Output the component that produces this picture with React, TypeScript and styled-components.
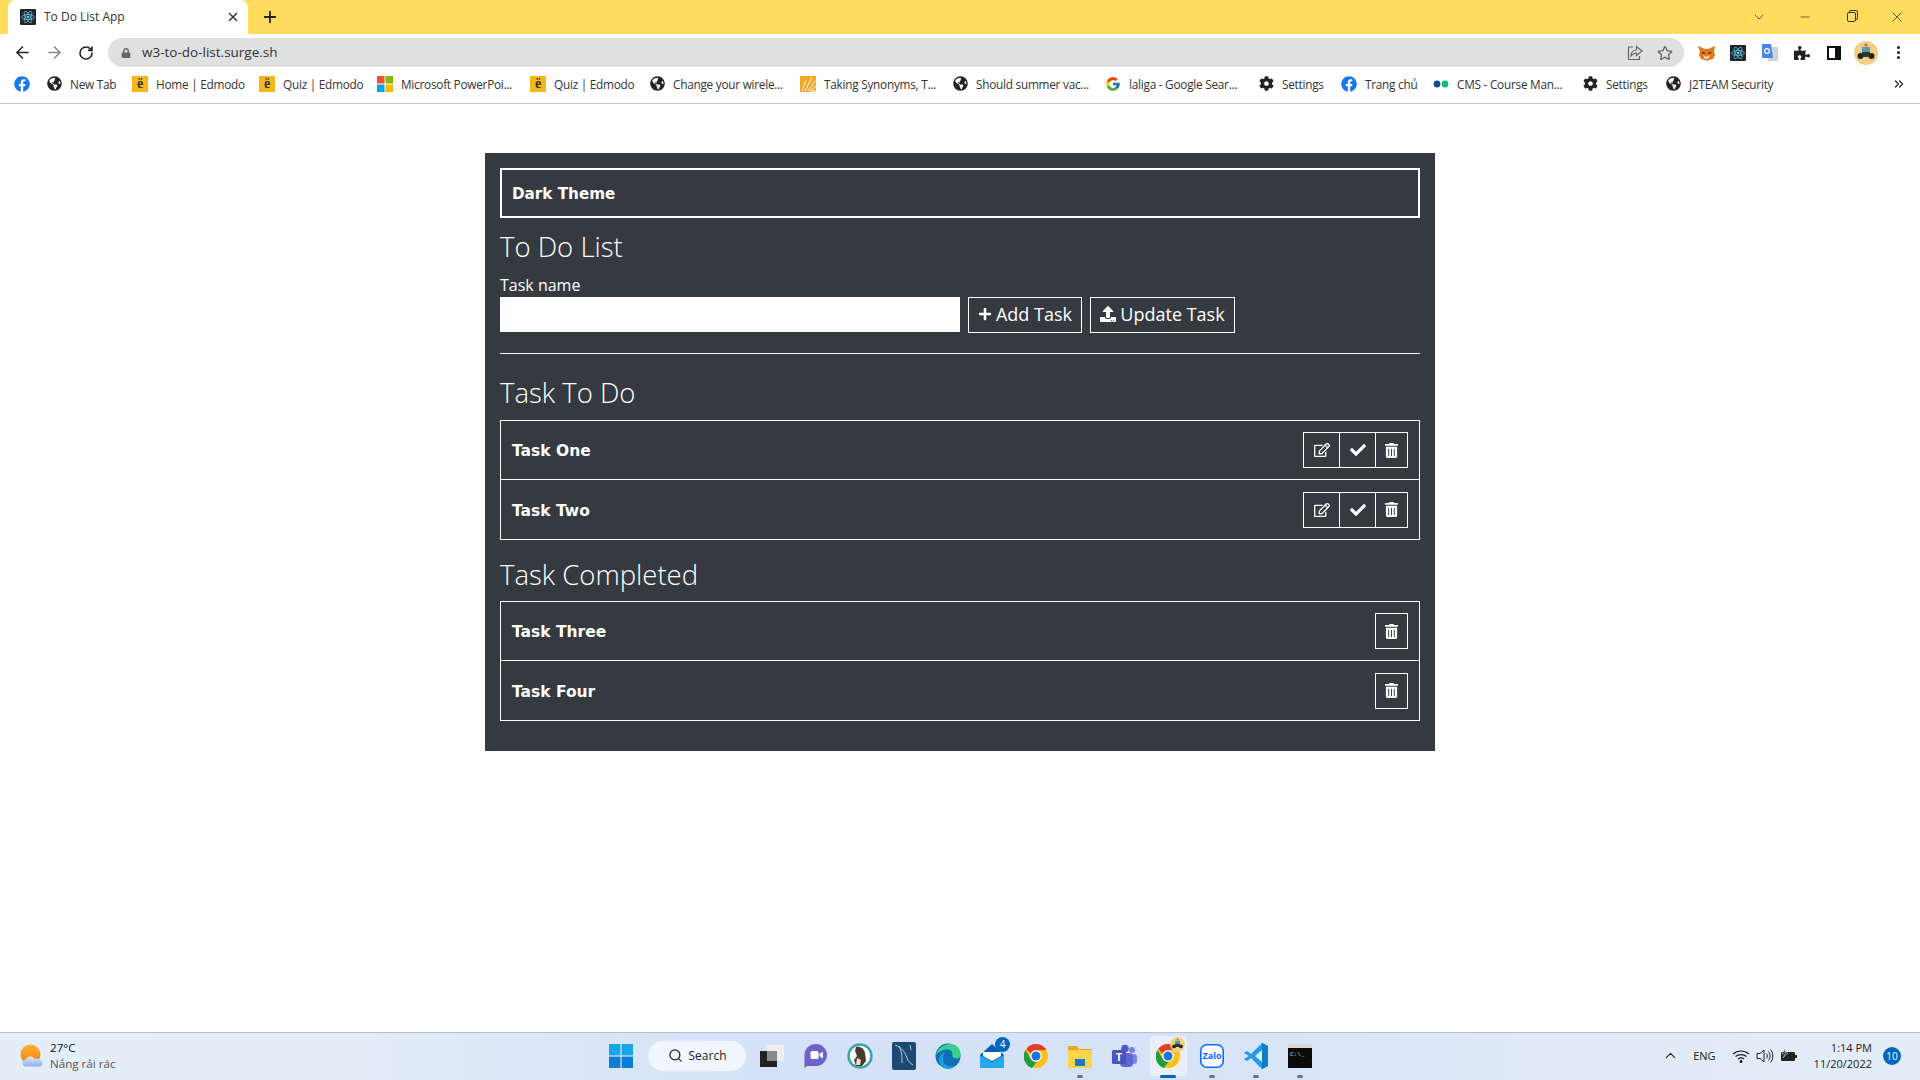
import React from "react";
import styled, { createGlobalStyle } from "styled-components";
import { ArrowLeft, ArrowRight, RotateCw, ChevronDown, Minus, X, Plus, Search, ChevronUp, ChevronsRight, EllipsisVertical } from "lucide-react";
import { FaFacebook, FaGlobeAmericas, FaCog, FaLock, FaRegStar, FaPuzzlePiece, FaRegEdit, FaCheck, FaTrashAlt, FaPlus, FaUpload } from "react-icons/fa";
import { FcGoogle } from "react-icons/fc";

const Global = createGlobalStyle`
  html, body { margin: 0; padding: 0; height: 100%; background: #fff; }
  #root { height: 100%; }
  * { box-sizing: border-box; }
`;

const Page = styled.div`
  height: 1080px;
  display: flex;
  flex-direction: column;
  font-family: "Open Sans", "Liberation Sans", sans-serif;
  overflow: hidden;
`;

const TabStrip = styled.div`
  height: 34px;
  flex: none;
  background: #ffdc5d;
  display: flex;
  align-items: center;
  padding-left: 8px;
`;
const Tab = styled.div`
  width: 240px;
  height: 34px;
  background: #fff;
  border-radius: 8px 8px 0 0;
  display: flex;
  align-items: center;
  padding: 0 8px 0 12px;
  font-size: 12px;
  color: #333;
`;
const TabTitle = styled.span`
  margin-left: 8px;
  padding-bottom: 1px;
  flex: 1;
`;
const NewTab = styled.div`
  margin-left: 13px;
  display: flex;
  color: #222;
`;
const WindowButtons = styled.div`
  margin-left: auto;
  display: flex;
  align-items: center;
  color: #333;
`;
const WindowButton = styled.div`
  width: 46px;
  display: flex;
  justify-content: center;
`;
const Restore = styled.div`
  width: 9px;
  height: 10px;
  border: 1px solid #333;
  border-radius: 2px;
  box-shadow: 2px -2px 0 -1px #ffdc5d, 2px -2px 0 0 #333;
`;

const Toolbar = styled.div`
  height: 34px;
  flex: none;
  display: flex;
  align-items: center;
  padding: 4px 0 1px 10px;
  background: #fff;
`;
const NavButton = styled.div<{ $dim?: boolean }>`
  width: 24px;
  margin-right: 8px;
  display: flex;
  justify-content: center;
  color: ${(p) => (p.$dim ? "#8a8a8a" : "#222")};
`;
const AddressBar = styled.div`
  width: 1576px;
  height: 29px;
  margin-left: 2px;
  border-radius: 15px;
  background: #e0e0e0;
  display: flex;
  align-items: center;
  padding: 0 11px 0 13px;
  font-size: 13.5px;
  color: #333;
  flex: none;
`;
const Url = styled.span`
  margin-left: 11px;
  padding-bottom: 1px;
  flex: 1;
`;
const BarIcons = styled.div`
  display: flex;
  align-items: center;
  gap: 14px;
  color: #666;
`;
const Extensions = styled.div`
  display: flex;
  align-items: center;
  margin-left: 6px;
`;
const Extension = styled.div`
  width: 32px;
  display: flex;
  justify-content: center;
  align-items: center;
  color: #222;
`;

const Bookmarks = styled.div`
  height: 36px;
  flex: none;
  display: flex;
  align-items: center;
  gap: 18px;
  padding: 0 0 4px 14px;
  background: #fff;
  border-bottom: 1px solid #c8c8c8;
`;
const Bookmark = styled.div`
  display: flex;
  align-items: center;
  gap: 8px;
  font-size: 11.8px;
  color: #333;
`;
const PinnedBookmark = styled.span`
  display: flex;
  margin-right: -2px;
`;
const BookmarkIcon = styled.span`
  width: 16px;
  display: flex;
  justify-content: center;
  flex: none;
`;
const BookmarkLabel = styled.span<{ $w: number }>`
  width: ${(p) => p.$w}px;
  white-space: nowrap;
  letter-spacing: -0.25px;
`;
const More = styled.div`
  margin-left: auto;
  margin-right: 14px;
  display: flex;
  color: #333;
`;
const Edmodo = styled.div`
  width: 16px;
  height: 16px;
  background: #f4b81c;
  color: #333;
  font: bold 14px/16px "Liberation Serif", serif;
  text-align: center;
`;

const Main = styled.main`
  flex: 1;
  padding-top: 49px;
  background: #fff;
`;
const Panel = styled.section`
  width: 950px;
  margin: 0 auto;
  background: #343a40;
  color: #fff;
  padding: 15px 15px 30px;
`;
const ThemeBox = styled.div`
  height: 50px;
  border: 2px solid #fff;
  display: flex;
  align-items: center;
  padding: 2px 0 0 10px;
`;
const BoldName = styled.span`
  font-family: "DejaVu Sans", sans-serif;
  font-weight: 700;
  font-size: 15.5px;
`;
const ThemeName = styled(BoldName)`
  font-size: 15.2px;
`;
const TaskName = styled(BoldName)`
  padding-top: 2px;
`;
const Heading = styled.h3<{ $top: number }>`
  margin: ${(p) => p.$top}px 0 0;
  font-size: 27.5px;
  line-height: 34px;
  font-weight: 300;
`;
const FieldLabel = styled.label`
  display: block;
  margin-top: 9px;
  font-size: 16px;
  line-height: 24px;
`;
const FormRow = styled.div`
  display: flex;
  align-items: flex-start;
  gap: 8px;
`;
const TaskInput = styled.input`
  width: 460px;
  height: 35px;
  border: 0;
  background: #fff;
  padding: 0;
`;
const FormButton = styled.button<{ $w: number }>`
  width: ${(p) => p.$w}px;
  height: 36px;
  background: transparent;
  border: 1px solid #fff;
  color: #fff;
  padding: 0 0 2px;
  font: 18px "Open Sans", sans-serif;
  display: flex;
  align-items: center;
  justify-content: center;
  gap: 4px;
`;
const Rule = styled.hr`
  margin: 20px 0 0;
  border: 0;
  border-top: 1px solid #fff;
`;
const TaskList = styled.ul<{ $top: number }>`
  list-style: none;
  margin: ${(p) => p.$top}px 0 0;
  padding: 0;
  border: 1px solid #fff;
`;
const TaskRow = styled.li`
  height: 58px;
  display: flex;
  align-items: center;
  justify-content: space-between;
  padding: 0 11px 0 11px;
  & + & {
    border-top: 1px solid #fff;
    height: 60px;
  }
`;
const ButtonGroup = styled.div`
  display: flex;
`;
const IconButton = styled.button<{ $w: number }>`
  width: ${(p) => p.$w}px;
  height: 36px;
  background: transparent;
  border: 1px solid #fff;
  color: #fff;
  padding: 0;
  display: flex;
  align-items: center;
  justify-content: center;
  font-size: 14px;
  & + & {
    margin-left: -1px;
  }
`;

const Taskbar = styled.footer`
  height: 48px;
  flex: none;
  display: flex;
  align-items: center;
  padding-bottom: 2px;
  border-top: 1px solid #b9c0c9;
  background: linear-gradient(90deg, #e4eef8 0%, #e2ecf7 18%, #d4e1f8 40%, #d6e2f7 60%, #dfe9f7 80%, #e3edf7 100%);
`;
const Weather = styled.div`
  width: 609px;
  flex: none;
  display: flex;
  align-items: center;
  padding-left: 20px;
  gap: 6px;
  font-size: 11.6px;
  line-height: 16px;
  color: #111;
`;
const WeatherSub = styled.div`
  color: #555;
`;
const TaskIcons = styled.div`
  display: flex;
  align-items: center;
`;
const TaskIcon = styled.div<{ $active?: boolean; $dot?: boolean }>`
  position: relative;
  width: ${(p) => (p.$active ? 37 : 44)}px;
  height: 40px;
  margin: 0 ${(p) => (p.$active ? 3.5 : 0)}px;
  display: flex;
  align-items: center;
  justify-content: center;
  ${(p) => (p.$active ? `background: #e8eff9; border-radius: 4px;` : "")}
  ${(p) =>
    p.$dot
      ? `&::after { content: ""; position: absolute; bottom: -2px; left: 19px; width: 6px; height: 3px; border-radius: 2px; background: #6b7480; }`
      : ""}
  ${(p) =>
    p.$active
      ? `&::after { content: ""; position: absolute; bottom: -2px; left: 10px; width: 16px; height: 3px; border-radius: 2px; background: #0067c0; }`
      : ""}
`;
const OverlayAvatar = styled.div`
  position: absolute;
  top: 1px;
  right: 2px;
  display: flex;
`;
const SearchPill = styled.div`
  width: 98px;
  height: 30px;
  margin: 0 4px 0 15px;
  border-radius: 15px;
  background: #f1f5fc;
  display: flex;
  align-items: center;
  justify-content: center;
  gap: 6px;
  font-size: 12px;
  color: #222;
`;
const Badge = styled.span`
  position: absolute;
  top: 1px;
  right: 4px;
  width: 15px;
  height: 15px;
  border-radius: 50%;
  background: #0067c0;
  color: #fff;
  font-size: 10px;
  line-height: 15px;
  text-align: center;
`;
const Tray = styled.div`
  margin-left: auto;
  display: flex;
  align-items: center;
  padding-right: 19px;
  font-size: 11px;
  color: #222;
`;
const TrayIcon = styled.div<{ $mr: number }>`
  display: flex;
  margin-right: ${(p) => p.$mr}px;
`;
const Clock = styled.div`
  text-align: right;
  line-height: 16px;
  margin-left: 16px;
`;
const Notify = styled.div`
  width: 18px;
  height: 18px;
  margin-left: 11px;
  border-radius: 50%;
  background: #0067c0;
  color: #fff;
  font-size: 10px;
  line-height: 18px;
  text-align: center;
`;

const ReactMark = ({ size = 16 }: { size?: number }) => (
  <svg width={size} height={size} viewBox="0 0 16 16">
    <rect width="16" height="16" rx="1" fill="#20232a" />
    <g fill="none" stroke="#61dafb" strokeWidth="0.7">
      <ellipse cx="8" cy="8" rx="6.4" ry="2.5" />
      <ellipse cx="8" cy="8" rx="6.4" ry="2.5" transform="rotate(60 8 8)" />
      <ellipse cx="8" cy="8" rx="6.4" ry="2.5" transform="rotate(120 8 8)" />
    </g>
    <circle cx="8" cy="8" r="1.3" fill="#61dafb" />
  </svg>
);
const Microsoft = () => (
  <svg width="16" height="16" viewBox="0 0 16 16">
    <rect width="7.5" height="7.5" fill="#f25022" />
    <rect x="8.5" width="7.5" height="7.5" fill="#7fba00" />
    <rect y="8.5" width="7.5" height="7.5" fill="#00a4ef" />
    <rect x="8.5" y="8.5" width="7.5" height="7.5" fill="#ffb900" />
  </svg>
);
const Synonyms = () => (
  <svg width="16" height="16" viewBox="0 0 16 16">
    <rect width="16" height="16" fill="#f5a623" />
    <g stroke="#fff" strokeWidth="1">
      <path d="M5 15 12 1M8 15 15 5M10 15 16 10M11 15h5M2 15 6 4" />
    </g>
  </svg>
);
const Dots = () => (
  <svg width="16" height="16" viewBox="0 0 16 16">
    <circle cx="4" cy="8" r="3.4" fill="#0b4f9c" />
    <circle cx="12" cy="8" r="3.4" fill="#12b886" />
  </svg>
);
const Fox = () => (
  <svg width="17" height="16" viewBox="0 0 17 16">
    <path d="M0 1 7 4h3l7-3-1 6 1 3-2 4-4 1-2 1-2-1-4-1-2-4 1-3z" fill="#e2761b" />
    <path d="M5 10 8.500 12 12 10 10 14H7z" fill="#f6e2c8" />
    <path d="M3 8 6 7 7 9zM14 8 11 7 10 9z" fill="#30261c" />
  </svg>
);
const Translate = () => (
  <svg width="16" height="18" viewBox="0 0 16 18">
    <path d="M8 3h8v14H6z" fill="#cfd3d8" />
    <path d="M0 0h9l2 14H0z" fill="#4a86e8" />
    <circle cx="5" cy="7" r="2.4" fill="none" stroke="#fff" strokeWidth="1.2" />
  </svg>
);
const Avatar = ({ size = 24 }: { size?: number }) => (
  <svg width={size} height={size} viewBox="0 0 24 24">
    <circle cx="12" cy="12" r="12" fill="#f3cf85" />
    <rect x="8" y="6" width="8" height="6" fill="#4f9ea8" />
    <circle cx="6.500" cy="15" r="3" fill="#222" />
    <circle cx="17.500" cy="15" r="3" fill="#222" />
    <rect x="8" y="11" width="8" height="5" fill="#333" />
    <circle cx="12" cy="4" r="1.500" fill="#d9534f" />
  </svg>
);
const SidePanel = () => (
  <svg width="14" height="14" viewBox="0 0 14 14">
    <rect x="1" y="1" width="12" height="12" fill="#fff" stroke="#111" strokeWidth="2" />
    <rect x="8" y="1" width="5" height="12" fill="#111" />
  </svg>
);
const Share = () => (
  <svg width="16" height="16" viewBox="0 0 16 16" fill="none" stroke="#666" strokeWidth="1.2">
    <path d="M6 2H1.500v12.500h11V11" />
    <path d="M9.500 1.500 15 6l-5.500 4.500V8C7 8 5.500 9 4 11c0-3.500 2-6 5.500-6z" fill="#e0e0e0" />
  </svg>
);
const Sun = () => (
  <svg width="24" height="24" viewBox="0 0 24 24">
    <defs>
      <linearGradient id="sun" x1="0" y1="0" x2="0" y2="1">
        <stop offset="0" stopColor="#fbb62a" />
        <stop offset="1" stopColor="#ee7d20" />
      </linearGradient>
      <linearGradient id="cloud" x1="0" y1="0" x2="0" y2="1">
        <stop offset="0" stopColor="#dbe6f6" />
        <stop offset="1" stopColor="#90b0e6" />
      </linearGradient>
    </defs>
    <circle cx="10.500" cy="10.500" r="10" fill="url(#sun)" />
    <path d="M6 22.500a3.500 3.500 0 0 1 0-7c1-3.500 7-4 8.500-.5 4-1 8 1.500 8 4.500 0 2-1.500 3-3 3z" fill="url(#cloud)" />
  </svg>
);
const WindowsLogo = () => (
  <svg width="24" height="24" viewBox="0 0 24 24">
    <rect width="11.400" height="11.400" fill="#18a5ea" />
    <rect x="12.600" width="11.400" height="11.400" fill="#18a5ea" />
    <rect y="12.600" width="11.400" height="11.400" fill="#0b7fd6" />
    <rect x="12.600" y="12.600" width="11.400" height="11.400" fill="#0b7fd6" />
  </svg>
);
const TaskView = () => (
  <svg width="24" height="24" viewBox="0 0 24 24">
    <rect x="7" y="1" width="17" height="16" fill="#eceef0" />
    <rect y="7" width="17" height="16" fill="#222" />
    <rect x="7" y="7" width="10" height="10" fill="#8a8a8a" />
  </svg>
);
const Chat = () => (
  <svg width="24" height="26" viewBox="0 0 24 26">
    <path d="M12 1a11 11 0 0 1 0 22H3c-1 0-1.500 2-2.500 2V12A11 11 0 0 1 12 1z" fill="#6d62c9" />
    <rect x="6.500" y="8" width="8" height="8" rx="1.500" fill="#fff" />
    <path d="M15.500 11 19 8.500v7L15.500 13z" fill="#fff" />
  </svg>
);
const Beaver = () => (
  <svg width="26" height="26" viewBox="0 0 26 26">
    <circle cx="13" cy="13" r="11.500" fill="#fff" stroke="#3ba6a6" strokeWidth="2.500" />
    <path d="M9 4c4-1 8 1 9 6l1 8-4 5H9l-2-6 3-4-2-5z" fill="#4c3a2e" />
    <path d="M10 15l4 2-1 5H9z" fill="#e8e0d6" />
  </svg>
);
const Workbench = () => (
  <svg width="24" height="28" viewBox="0 0 24 28">
    <rect width="24" height="28" rx="2" fill="#1d4a72" />
    <path d="M3 3c6 2 10 7 12 13 1 3 3 5 6 7M7 4c3 6 3 11 3 17M18 3l1 5" fill="none" stroke="#c6d6e2" strokeWidth="0.9" />
  </svg>
);
const Edge = () => (
  <svg width="26" height="26" viewBox="0 0 26 26">
    <circle cx="13" cy="13" r="12.500" fill="#0b70b8" />
    <path d="M1 12C3 3 13-1 20 2c4 2 6 6 5.500 11-.2 2-3 3-6 2-3-1-2-3-2-4 0-4-5-6-9-4-3 1-6 3-7.500 5z" fill="#3bcf8e" />
    <path d="M8 16c0 5 5 9 12 7-2 2-4 3-7 3C9 26 5 23 4 18c0-5 3-8 6-9-2 2-2 5-2 7z" fill="#1c9fe0" />
  </svg>
);
const Mail = () => (
  <svg width="24" height="24" viewBox="0 0 24 24">
    <path d="M0 11 12 0l12 11v13H0z" fill="#0a5db5" />
    <path d="M0 11l12 7 12-7v13H0z" fill="#25a8ee" />
    <path d="M3 8h18v4l-9 5-9-5z" fill="#fff" />
  </svg>
);
const Chrome = ({ size = 24 }: { size?: number }) => (
  <svg width={size} height={size} viewBox="0 0 24 24">
    <circle cx="12" cy="12" r="12" fill="#fbc116" />
    <path d="M12 0a12 12 0 0 1 10.400 6H12a6 6 0 0 0-5.500 3.600L2.300 5A12 12 0 0 1 12 0z" fill="#e33b2e" />
    <path d="M1.600 6 7 15.500a6 6 0 0 0 5.500 2.500L8 24A12 12 0 0 1 1.600 6z" fill="#229a44" />
    <circle cx="12" cy="12" r="5.800" fill="#fff" />
    <circle cx="12" cy="12" r="4.500" fill="#1a73e8" />
  </svg>
);
const Folder = () => (
  <svg width="24" height="24" viewBox="0 0 24 24">
    <path d="M0 2h9l2 3h13v19H0z" fill="#e6a817" />
    <rect y="6" width="24" height="18" fill="#ffd34e" />
    <rect x="7" y="15" width="10" height="7" fill="#1878c9" />
  </svg>
);
const Teams = () => (
  <svg width="25" height="24" viewBox="0 0 25 24">
    <circle cx="20" cy="6" r="3" fill="#7b83eb" />
    <rect x="16" y="10" width="9" height="10" rx="3" fill="#7b83eb" />
    <circle cx="13" cy="4.500" r="3.800" fill="#5059c9" />
    <rect x="8" y="9" width="13" height="14" rx="4" fill="#5f67d4" />
    <rect y="6" width="14" height="14" rx="1.500" fill="#4b53bc" />
    <text x="7" y="17" textAnchor="middle" fontSize="11" fontWeight="700" fontFamily="Open Sans, sans-serif" fill="#fff">
      T
    </text>
  </svg>
);
const Zalo = () => (
  <svg width="24" height="24" viewBox="0 0 24 24">
    <rect x="0.800" y="0.800" width="22.400" height="22.400" rx="6" fill="#fff" stroke="#0a6cff" strokeWidth="1.600" />
    <text x="12" y="15" textAnchor="middle" fontSize="9" fontWeight="700" fontFamily="Open Sans, sans-serif" fill="#0a6cff">
      Zalo
    </text>
  </svg>
);
const VSCode = () => (
  <svg width="24" height="26" viewBox="0 0 24 26">
    <path d="M18 0l6 3v20l-6 3L7 15l-4 3-3-2 5-3-5-3 3-2 4 3z" fill="#1f9cf0" />
    <path d="M18 7v12l-7-6z" fill="#e6eefb" />
    <path d="M18 0l6 3v20l-6 3z" fill="#0d7cc9" />
  </svg>
);
const Terminal = () => (
  <svg width="24" height="24" viewBox="0 0 24 24">
    <rect width="24" height="24" fill="#0b0b0b" />
    <rect width="24" height="4" fill="#d9d9d9" />
    <text x="2" y="12" fontSize="6" fill="#ddd" fontFamily="Liberation Mono, monospace">
      C:\_
    </text>
  </svg>
);
const Speaker = () => (
  <svg width="18" height="16" viewBox="0 0 18 16" fill="none" stroke="#222" strokeWidth="1">
    <path d="M1 5.500h3L8 2v12L4 10.500H1z" />
    <path d="M10.500 5.500c1 1.500 1 3.500 0 5M12.500 3.500c2 2.500 2 6.500 0 9M14.500 1.500c3 3.500 3 9.500 0 13" />
  </svg>
);
const Wifi = () => (
  <svg width="18" height="14" viewBox="0 0 18 14" fill="none" stroke="#222" strokeWidth="1.200">
    <path d="M1 5c4.500-4 11.500-4 16 0M3.500 7.500c3-2.500 8-2.500 11 0M6 10c1.800-1.300 4.200-1.300 6 0" />
    <circle cx="9" cy="12.500" r="0.900" fill="#222" />
  </svg>
);
const Battery = () => (
  <svg width="18" height="14" viewBox="0 0 18 14">
    <rect x="1" y="3" width="14" height="9" rx="1" fill="#222" />
    <rect x="15" y="6" width="2" height="3" fill="#222" />
    <path d="M5 0 2 5h3l-2 4 5-5H5z" fill="#222" stroke="#e3edf7" strokeWidth="0.500" />
  </svg>
);

const bookmarks: { icon: React.ReactNode; label: string; w: number }[] = [
  { icon: <FaGlobeAmericas size={15} color="#222" />, label: "New Tab", w: 44 },
  { icon: <Edmodo>ë</Edmodo>, label: "Home | Edmodo", w: 85 },
  { icon: <Edmodo>ë</Edmodo>, label: "Quiz | Edmodo", w: 76 },
  { icon: <Microsoft />, label: "Microsoft PowerPoi...", w: 111 },
  { icon: <Edmodo>ë</Edmodo>, label: "Quiz | Edmodo", w: 77 },
  { icon: <FaGlobeAmericas size={15} color="#222" />, label: "Change your wirele...", w: 109 },
  { icon: <Synonyms />, label: "Taking Synonyms, T...", w: 110 },
  { icon: <FaGlobeAmericas size={15} color="#222" />, label: "Should summer vac...", w: 111 },
  { icon: <FcGoogle size={16} />, label: "laliga - Google Sear...", w: 111 },
  { icon: <FaCog size={15} color="#222" />, label: "Settings", w: 41 },
  { icon: <FaFacebook size={16} color="#1877f2" />, label: "Trang chủ", w: 50 },
  { icon: <Dots />, label: "CMS - Course Man...", w: 107 },
  { icon: <FaCog size={15} color="#222" />, label: "Settings", w: 41 },
  { icon: <FaGlobeAmericas size={15} color="#222" />, label: "J2TEAM Security", w: 86 },
];

const todo = ["Task One", "Task Two"];
const done = ["Task Three", "Task Four"];

export default function App() {
  return (
    <Page>
      <Global />
      <TabStrip>
        <Tab>
          <ReactMark />
          <TabTitle>To Do List App</TabTitle>
          <X size={14} strokeWidth={2.4} color="#333" />
        </Tab>
        <NewTab>
          <Plus size={18} strokeWidth={2.4} />
        </NewTab>
        <WindowButtons>
          <WindowButton>
            <ChevronDown size={16} strokeWidth={1.2} />
          </WindowButton>
          <WindowButton>
            <Minus size={14} strokeWidth={1.2} />
          </WindowButton>
          <WindowButton>
            <Restore />
          </WindowButton>
          <WindowButton>
            <X size={16} strokeWidth={1.2} />
          </WindowButton>
        </WindowButtons>
      </TabStrip>
      <Toolbar>
        <NavButton>
          <ArrowLeft size={19} />
        </NavButton>
        <NavButton $dim>
          <ArrowRight size={19} />
        </NavButton>
        <NavButton>
          <RotateCw size={16} strokeWidth={2.4} />
        </NavButton>
        <AddressBar>
          <FaLock size={10} color="#666" />
          <Url>w3-to-do-list.surge.sh</Url>
          <BarIcons>
            <Share />
            <FaRegStar size={16} />
          </BarIcons>
        </AddressBar>
        <Extensions>
          <Extension>
            <Fox />
          </Extension>
          <Extension>
            <ReactMark />
          </Extension>
          <Extension>
            <Translate />
          </Extension>
          <Extension>
            <FaPuzzlePiece size={16} />
          </Extension>
          <Extension>
            <SidePanel />
          </Extension>
          <Extension>
            <Avatar />
          </Extension>
          <Extension>
            <EllipsisVertical size={17} strokeWidth={2.4} />
          </Extension>
        </Extensions>
      </Toolbar>
      <Bookmarks>
        <PinnedBookmark>
          <FaFacebook size={16} color="#1877f2" />
        </PinnedBookmark>
        {bookmarks.map((b, i) => (
          <Bookmark key={i}>
            <BookmarkIcon>{b.icon}</BookmarkIcon>
            <BookmarkLabel $w={b.w}>{b.label}</BookmarkLabel>
          </Bookmark>
        ))}
        <More>
          <ChevronsRight size={14} strokeWidth={2.4} />
        </More>
      </Bookmarks>

      <Main>
        <Panel>
          <ThemeBox>
            <ThemeName>Dark Theme</ThemeName>
          </ThemeBox>
          <Heading $top={12}>To Do List</Heading>
          <FieldLabel>Task name</FieldLabel>
          <FormRow>
            <TaskInput aria-label="Task name" />
            <FormButton $w={114}>
              <FaPlus size={14} />
              Add Task
            </FormButton>
            <FormButton $w={145}>
              <FaUpload size={16} />
              Update Task
            </FormButton>
          </FormRow>
          <Rule />
          <Heading $top={22}>Task To Do</Heading>
          <TaskList $top={10}>
            {todo.map((t) => (
              <TaskRow key={t}>
                <TaskName>{t}</TaskName>
                <ButtonGroup>
                  <IconButton $w={37}>
                    <FaRegEdit size={16} />
                  </IconButton>
                  <IconButton $w={37}>
                    <FaCheck size={16} />
                  </IconButton>
                  <IconButton $w={33}>
                    <FaTrashAlt size={15} />
                  </IconButton>
                </ButtonGroup>
              </TaskRow>
            ))}
          </TaskList>
          <Heading $top={18}>Task Completed</Heading>
          <TaskList $top={9}>
            {done.map((t) => (
              <TaskRow key={t}>
                <TaskName>{t}</TaskName>
                <IconButton $w={33}>
                  <FaTrashAlt size={15} />
                </IconButton>
              </TaskRow>
            ))}
          </TaskList>
        </Panel>
      </Main>

      <Taskbar>
        <Weather>
          <Sun />
          <div>
            <div>27°C</div>
            <WeatherSub>Nắng rải rác</WeatherSub>
          </div>
        </Weather>
        <TaskIcons>
          <WindowsLogo />
          <SearchPill>
            <Search size={15} />
            Search
          </SearchPill>
          <TaskIcon>
            <TaskView />
          </TaskIcon>
          <TaskIcon>
            <Chat />
          </TaskIcon>
          <TaskIcon>
            <Beaver />
          </TaskIcon>
          <TaskIcon>
            <Workbench />
          </TaskIcon>
          <TaskIcon>
            <Edge />
          </TaskIcon>
          <TaskIcon>
            <Mail />
            <Badge>4</Badge>
          </TaskIcon>
          <TaskIcon>
            <Chrome />
          </TaskIcon>
          <TaskIcon $dot>
            <Folder />
          </TaskIcon>
          <TaskIcon>
            <Teams />
          </TaskIcon>
          <TaskIcon $active>
            <Chrome />
            <OverlayAvatar>
              <Avatar size={15} />
            </OverlayAvatar>
          </TaskIcon>
          <TaskIcon $dot>
            <Zalo />
          </TaskIcon>
          <TaskIcon $dot>
            <VSCode />
          </TaskIcon>
          <TaskIcon $dot>
            <Terminal />
          </TaskIcon>
        </TaskIcons>
        <Tray>
          <TrayIcon $mr={14}>
            <ChevronUp size={17} strokeWidth={1.6} />
          </TrayIcon>
          <TrayIcon $mr={16}>ENG</TrayIcon>
          <TrayIcon $mr={6}>
            <Wifi />
          </TrayIcon>
          <TrayIcon $mr={6}>
            <Speaker />
          </TrayIcon>
          <TrayIcon $mr={0}>
            <Battery />
          </TrayIcon>
          <Clock>
            <div>1:14 PM</div>
            <div>11/20/2022</div>
          </Clock>
          <Notify>10</Notify>
        </Tray>
      </Taskbar>
    </Page>
  );
}
